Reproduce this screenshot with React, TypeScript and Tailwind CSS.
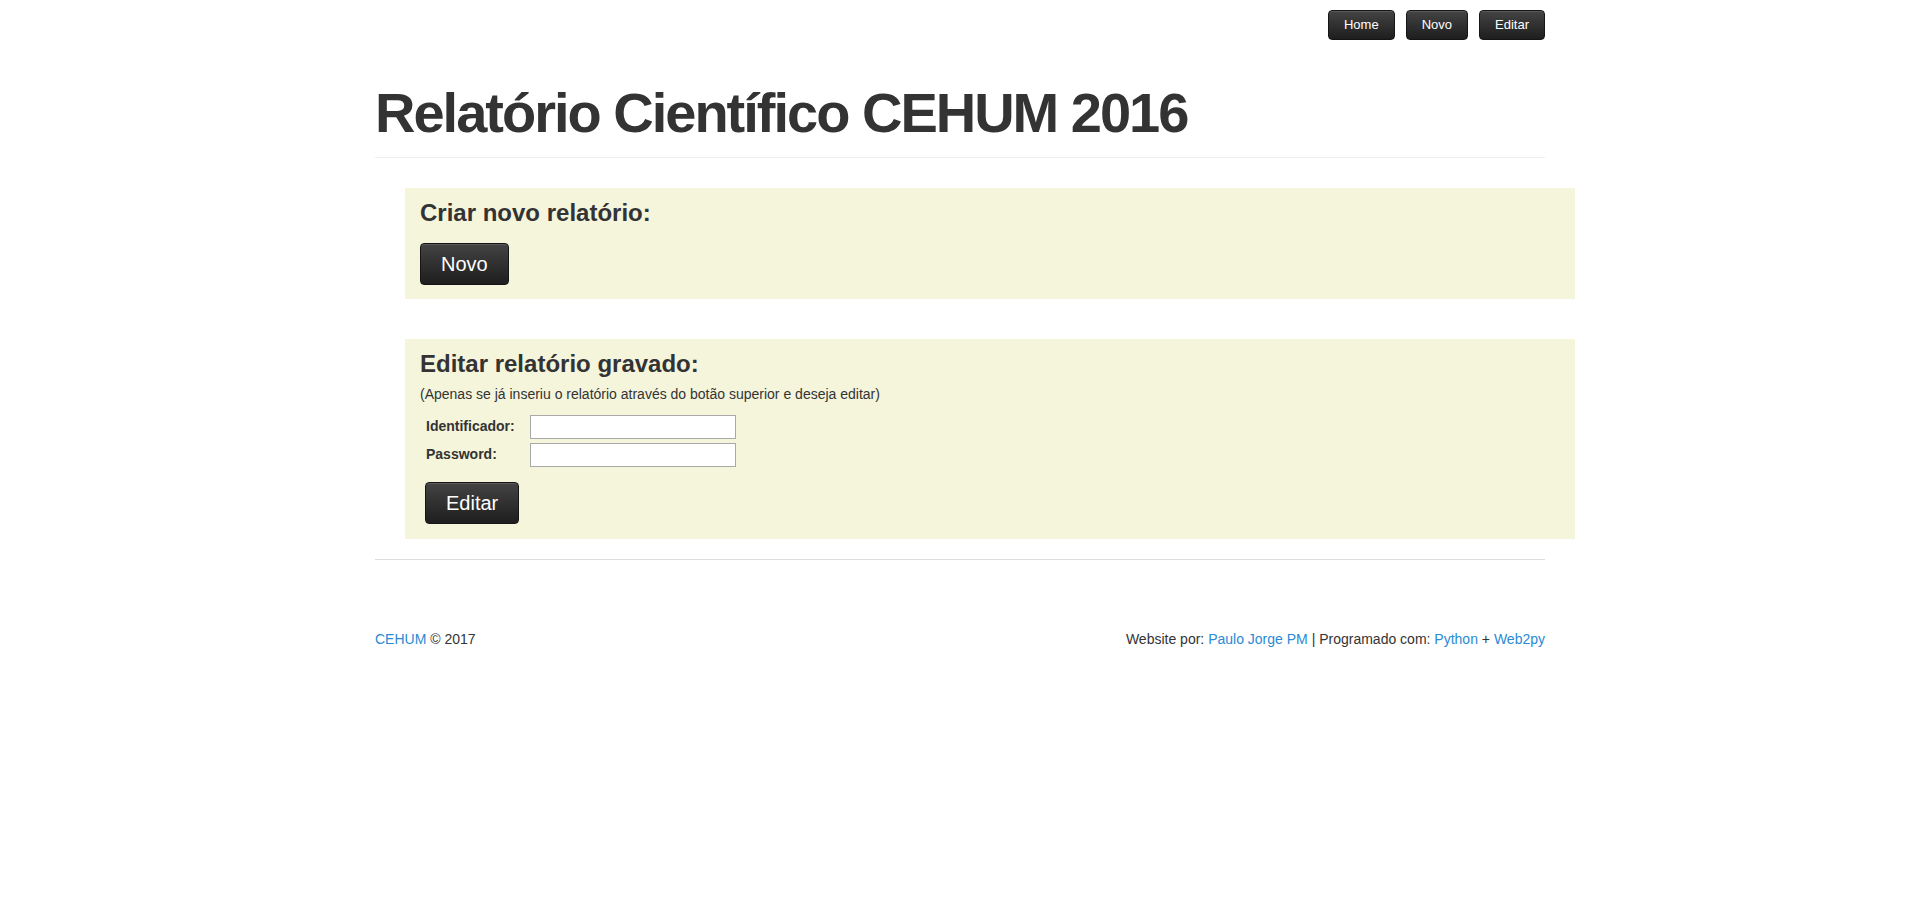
import React from "react";

const btn =
  "inline-flex items-center justify-center text-white rounded-[4px] border border-[#151515] bg-gradient-to-b from-[#444444] to-[#1e1e1e] shadow-[inset_0_1px_0_rgba(255,255,255,0.12)]";

function NavButton({ label }: { label: string }) {
  return <button className={`${btn} h-[30px] px-[15px] text-[13px]`}>{label}</button>;
}

function BigButton({ label }: { label: string }) {
  return <button className={`${btn} h-[42px] px-[20px] text-[20px]`}>{label}</button>;
}

export default function App() {
  return (
    <div className="min-h-screen bg-white text-[#333333] font-['Liberation_Sans',Arial,sans-serif]">
      <div className="w-[1170px] mx-auto">
        {/* Top nav */}
        <div className="flex justify-end gap-[11px] pt-[10px]">
          <NavButton label="Home" />
          <NavButton label="Novo" />
          <NavButton label="Editar" />
        </div>

        {/* Page header */}
        <div className="mt-[42px] pb-[13px] border-b border-[#eeeeee]">
          <h1 className="text-[56px] leading-[62px] font-bold tracking-[-2px] text-[#333333]">
            Relatório Científico CEHUM 2016
          </h1>
        </div>

        {/* Criar novo */}
        <div className="mt-[30px] ml-[30px] w-[1170px] bg-[#f5f5dc] pt-[12px] pb-[14px] px-[15px]">
          <h3 className="text-[24px] leading-[26px] font-bold text-[#333333]">Criar novo relatório:</h3>
          <div className="mt-[17px]">
            <BigButton label="Novo" />
          </div>
        </div>

        {/* Editar */}
        <div className="mt-[40px] ml-[30px] w-[1170px] bg-[#f5f5dc] pt-[12px] pb-[15px] px-[15px]">
          <h3 className="text-[24px] leading-[26px] font-bold text-[#333333]">Editar relatório gravado:</h3>
          <p className="mt-[7px] text-[14px] leading-[20px]">
            (Apenas se já inseriu o relatório através do botão superior e deseja editar)
          </p>
          <div className="mt-[11px] flex flex-col gap-[4px] pl-[6px]">
            <div className="flex items-start">
              <label className="w-[104px] pt-[1px] text-[14px] leading-[20px] font-bold">Identificador:</label>
              <input type="text" className="w-[206px] h-[24px] bg-white border border-[#a9a9a9] outline-none" />
            </div>
            <div className="flex items-start">
              <label className="w-[104px] pt-[1px] text-[14px] leading-[20px] font-bold">Password:</label>
              <input type="password" className="w-[206px] h-[24px] bg-white border border-[#a9a9a9] outline-none" />
            </div>
          </div>
          <div className="mt-[15px] pl-[5px]">
            <BigButton label="Editar" />
          </div>
        </div>

        <div className="mt-[20px] border-t border-[#dddddd]" />

        {/* Footer */}
        <div className="mt-[69px] flex justify-between text-[14px] leading-[20px]">
          <div>
            <a className="text-[#2a8ad4]">CEHUM</a> © 2017
          </div>
          <div>
            Website por: <a className="text-[#2a8ad4]">Paulo Jorge PM</a> | Programado com:{" "}
            <a className="text-[#2a8ad4]">Python</a> + <a className="text-[#2a8ad4]">Web2py</a>
          </div>
        </div>
      </div>
    </div>
  );
}
